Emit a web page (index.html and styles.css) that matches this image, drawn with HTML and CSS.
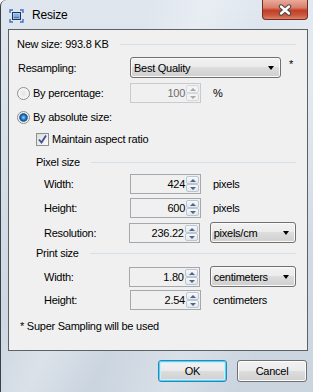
FILE: index.html
```html
<!DOCTYPE html>
<html lang="en">

<head>
    <meta charset="UTF-8">
    <title>Resize</title>
    <link rel="stylesheet" href="styles.css">
</head>

<body>
    <div class="window">
        <div class="titlebar">
            <svg class="app-icon" width="15" height="14" viewBox="0 0 15 14">
                <path d="M1 4V1h3M11 1h3v3M14 10v3h-3M4 13H1v-3" fill="none" stroke="#3f6fd0" stroke-width="1.4" />
                <rect x="3.5" y="3.5" width="8" height="7" fill="#cfe3f7" stroke="#1f3558" />
                <rect x="4.5" y="4.5" width="6" height="3" fill="#7fb3e8" />
                <rect x="4.5" y="7.5" width="6" height="2" fill="#4e7fb8" />
            </svg>
            <span class="title">Resize</span>
            <div class="close-btn">
                <svg width="16" height="12" viewBox="0 0 16 12">
                    <path d="M4 2.5l8 7M12 2.5l-8 7" stroke="#474747" stroke-width="4.4" stroke-linecap="round" />
                    <path d="M4 2.5l8 7M12 2.5l-8 7" stroke="#ffffff" stroke-width="2.4" stroke-linecap="round" />
                </svg>
            </div>
        </div>

        <div class="client">
            <div class="row size-row">
                <span>New size: 993.8 KB</span>
                <span class="rule"></span>
            </div>

            <div class="row resample-row">
                <span class="main-label">Resampling:</span>
                <div class="combo combo-wide">Best Quality<span class="arrow"></span></div>
                <span class="star">*</span>
            </div>

            <div class="row percent-row">
                <span class="choice"><span class="radio"></span>By percentage:</span>
                <div class="spin disabled">
                    <span class="value">100</span>
                    <span class="spin-btns"><span class="sb up"></span><span class="sb down"></span></span>
                </div>
                <span class="unit">%</span>
            </div>

            <div class="row absolute-row">
                <span class="choice"><span class="radio checked"></span>By absolute size:</span>
            </div>

            <div class="row check-row">
                <span class="checkbox">
                    <svg width="11" height="11" viewBox="0 0 11 11">
                        <path d="M2 5.5l2.5 3L9 1.5" fill="none" stroke="#3c4f8c" stroke-width="1.8" />
                    </svg>
                </span>
                Maintain aspect ratio
            </div>

            <div class="row section pixel-head">
                <span>Pixel size</span>
                <span class="rule"></span>
            </div>

            <div class="row field-row">
                <span class="field-label">Width:</span>
                <div class="spin">
                    <span class="value">424</span>
                    <span class="spin-btns"><span class="sb up"></span><span class="sb down"></span></span>
                </div>
                <span class="unit">pixels</span>
            </div>

            <div class="row field-row">
                <span class="field-label">Height:</span>
                <div class="spin">
                    <span class="value">600</span>
                    <span class="spin-btns"><span class="sb up"></span><span class="sb down"></span></span>
                </div>
                <span class="unit">pixels</span>
            </div>

            <div class="row field-row tall">
                <span class="field-label">Resolution:</span>
                <div class="spin">
                    <span class="value">236.22</span>
                    <span class="spin-btns"><span class="sb up"></span><span class="sb down"></span></span>
                </div>
                <div class="combo combo-unit">pixels/cm<span class="arrow"></span></div>
            </div>

            <div class="row section print-head">
                <span>Print size</span>
                <span class="rule"></span>
            </div>

            <div class="row field-row tall print-width">
                <span class="field-label">Width:</span>
                <div class="spin">
                    <span class="value">1.80</span>
                    <span class="spin-btns"><span class="sb up"></span><span class="sb down"></span></span>
                </div>
                <div class="combo combo-unit">centimeters<span class="arrow"></span></div>
            </div>

            <div class="row field-row print-height">
                <span class="field-label">Height:</span>
                <div class="spin">
                    <span class="value">2.54</span>
                    <span class="spin-btns"><span class="sb up"></span><span class="sb down"></span></span>
                </div>
                <span class="unit">centimeters</span>
            </div>

            <div class="row note-row">* Super Sampling will be used</div>
        </div>

        <div class="buttons">
            <button class="btn btn-default">OK</button>
            <button class="btn">Cancel</button>
        </div>
    </div>
</body>

</html>
```

FILE: styles.css
```css
body {
    margin: 0;
    width: 313px;
    height: 392px;
    overflow: hidden;
    font-family: "Liberation Sans", Arial, sans-serif;
    font-size: 11px;
    letter-spacing: -0.25px;
    color: #000;
}

.window {
    box-sizing: border-box;
    width: 313px;
    height: 392px;
    border-left: 1px solid #3a4047;
    border-top-left-radius: 6px;
    background-color: #ced8e3;
    background-image:
        linear-gradient(115deg, rgba(255, 255, 255, 0) 30%, rgba(255, 255, 255, 0.3) 42%, rgba(255, 255, 255, 0) 55%, rgba(255, 255, 255, 0.25) 70%, rgba(255, 255, 255, 0) 85%),
        linear-gradient(#dfe6ee, #cad4df);
    display: flex;
    flex-direction: column;
}

/* title bar */
.titlebar {
    height: 29px;
    display: flex;
    align-items: flex-start;
}

.app-icon {
    margin: 9px 0 0 8px;
}

.title {
    margin: 8px 0 0 8px;
    font-size: 12px;
    line-height: 14px;
    letter-spacing: -0.2px;
}

.close-btn {
    margin-left: auto;
    margin-right: 5px;
    width: 44px;
    height: 19px;
    border: 1px solid #6e3026;
    border-top: none;
    border-radius: 0 0 4px 4px;
    background: linear-gradient(#eaaa9c, #d97f6a 40%, #c23f27 55%, #cc573c 80%, #dc8267);
    display: flex;
    align-items: center;
    justify-content: center;
}

/* client area */
.client {
    box-sizing: border-box;
    margin-left: 7px;
    width: 300px;
    height: 322px;
    border: 1px solid #5c6166;
    background: #f0f0f0;
    padding: 0 11px 0 8px;
    display: flex;
    flex-direction: column;
}

.row {
    display: flex;
    align-items: center;
    flex-shrink: 0;
}

.rule {
    flex: 1;
    height: 1px;
    background: #d5dfe5;
    margin-left: 11px;
}

.size-row {
    height: 16px;
    margin-top: 6px;
}

.resample-row {
    height: 21px;
    margin-top: 5px;
}

.main-label {
    width: 112px;
    padding-left: 1px;
}

.star {
    margin-left: 8px;
    align-self: flex-start;
    margin-top: 1px;
}

.percent-row {
    height: 20px;
    margin-top: 5px;
}

.absolute-row {
    height: 16px;
    margin-top: 6px;
}

.choice {
    width: 113px;
    display: flex;
    align-items: center;
}

.radio {
    box-sizing: border-box;
    width: 13px;
    height: 13px;
    margin-right: 3px;
    border-radius: 50%;
    border: 1px solid #8e8f8f;
    background: radial-gradient(circle, #e4e4e4 0, #eeeeee 3px, #fbfbfb 6px);
}

.radio.checked {
    background: radial-gradient(circle, #8fd4ff 0, #2a86cf 2px, #154f8f 3.5px, #6e8aa8 4.2px, #eeeeee 4.6px, #fbfbfb 6px);
}

.check-row {
    height: 16px;
    margin-top: 6px;
    padding-left: 19px;
}

.checkbox {
    box-sizing: border-box;
    width: 13px;
    height: 13px;
    margin-right: 3px;
    border: 1px solid #8e8f8f;
    background: linear-gradient(135deg, #dcdcdc, #fbfbfb);
    display: flex;
    align-items: center;
    justify-content: center;
}

.section {
    height: 16px;
    padding-left: 19px;
}

.pixel-head {
    margin-top: 7px;
}

.print-head {
    margin-top: 2px;
}

.field-row {
    height: 20px;
    margin-top: 4px;
    padding-left: 27px;
}

.field-row.tall {
    height: 21px;
}

.print-width {
    margin-top: 5px;
}

.print-height {
    margin-top: 3px;
}

.field-label {
    width: 86px;
}

.note-row {
    height: 16px;
    margin-top: 8px;
    padding-left: 3px;
}

/* numeric up-down */
.spin {
    box-sizing: border-box;
    width: 71px;
    height: 20px;
    border: 1px solid #a4a8ad;
    background: #f0f0f0;
    display: flex;
}

.spin .value {
    flex: 1;
    text-align: right;
    line-height: 18px;
    padding-right: 1px;
}

.spin-btns {
    width: 13px;
    margin: 1px 1px 1px 0;
    display: flex;
    flex-direction: column;
}

.sb {
    flex: 1;
    position: relative;
    box-sizing: border-box;
    border: 1px solid #bcc6d0;
    border-radius: 2px;
    background: linear-gradient(#f7f9fb, #e2e7ed);
}

.sb::after {
    content: "";
    position: absolute;
    left: 3px;
    top: 2px;
    border-left: 3px solid transparent;
    border-right: 3px solid transparent;
}

.sb.up::after {
    border-bottom: 3px solid #4f6488;
}

.sb.down::after {
    border-top: 3px solid #4f6488;
}

.spin.disabled {
    border-color: #c7cace;
    color: #6d6d6d;
}

.spin.disabled .sb {
    border-color: #d6d9dc;
    background: #f3f3f3;
}

.spin.disabled .sb.up::after {
    border-bottom-color: #a8a8a8;
}

.spin.disabled .sb.down::after {
    border-top-color: #a8a8a8;
}

.unit {
    margin-left: 12px;
}

/* combo boxes */
.combo {
    box-sizing: border-box;
    height: 21px;
    border: 1px solid #707070;
    border-radius: 3px;
    background: linear-gradient(#f2f2f2, #ebebeb 50%, #dddddd 50%, #cfcfcf);
    box-shadow: inset 0 0 0 1px #fafafa;
    display: flex;
    align-items: center;
    padding-left: 3px;
    position: relative;
}

.combo-wide {
    width: 151px;
}

.combo-unit {
    width: 87px;
    margin-left: 10px;
}

.arrow {
    position: absolute;
    right: 6px;
    top: 8px;
    border-left: 3.5px solid transparent;
    border-right: 3.5px solid transparent;
    border-top: 4px solid #000;
}

/* dialog buttons */
.buttons {
    display: flex;
    justify-content: flex-end;
    gap: 10px;
    margin-top: 9px;
    padding-right: 6px;
}

.btn {
    box-sizing: border-box;
    width: 70px;
    height: 22px;
    padding: 0;
    border: 1px solid #707070;
    border-radius: 3px;
    background: linear-gradient(#f2f2f2, #ebebeb 50%, #dddddd 50%, #cfcfcf);
    box-shadow: inset 0 0 0 1px #fcfcfc;
    font-family: "Liberation Sans", Arial, sans-serif;
    font-size: 11px;
    letter-spacing: -0.25px;
    color: #000;
}

.btn-default {
    width: 69px;
    border-color: #3c7fb1;
    box-shadow: inset 0 0 0 1px #48d8fb, inset 0 0 0 2px #c9eefc;
}
```
